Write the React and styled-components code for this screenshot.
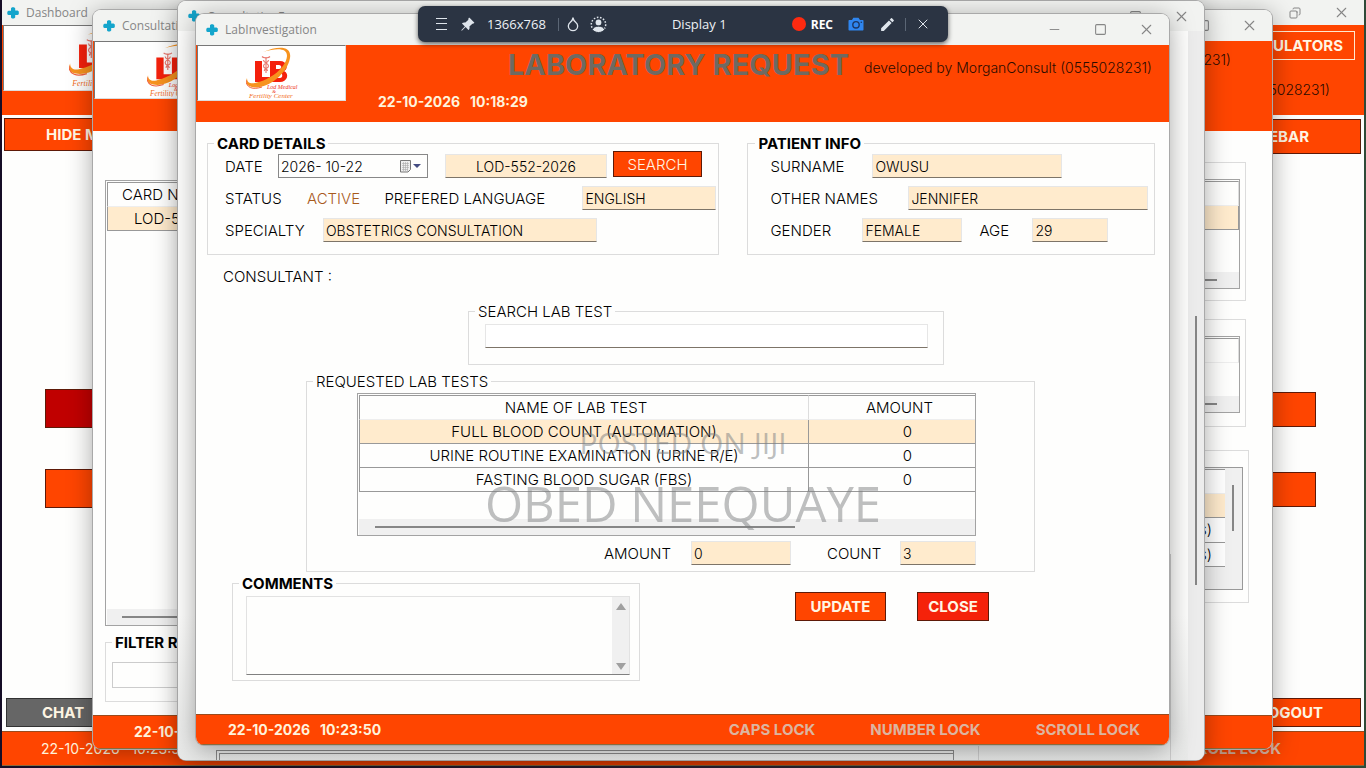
import React from "react";
import styled, { createGlobalStyle, css } from "styled-components";
import { BsPinAngleFill } from "react-icons/bs";
import { MdEdit } from "react-icons/md";
import { Droplet, X, Square, Minus, Copy } from "lucide-react";

const GlobalStyle = createGlobalStyle`
  * {
    box-sizing: border-box;
  }
  body {
    margin: 0;
    font-family: Inter, "Liberation Sans", sans-serif;
    font-size: 15px;
    font-weight: 300;
    color: #000;
  }
  button, input, textarea {
    font: inherit;
    color: inherit;
    margin: 0;
    border-radius: 0;
  }
`;

const orange = "#ff4500";
const cream = "#ffebcd";

const Desktop = styled.div`
  position: relative;
  height: 100vh;
  min-height: 700px;
  overflow: hidden;
  background: linear-gradient(90deg, #150d26 0%, #2b2338 50%, #2f4a38 100%);
`;

/* windows are stacked on the desktop, each with its own insets */
const Frame = styled.section`
  position: absolute;
  top: ${({ $inset }) => $inset[0]}px;
  right: ${({ $inset }) => $inset[1]}px;
  bottom: ${({ $inset }) => $inset[2]}px;
  left: ${({ $inset }) => $inset[3]}px;
  display: flex;
  flex-direction: column;
  overflow: hidden;
  background: #fefefd;
  border-radius: ${({ $flat }) => ($flat ? 0 : 8)}px;
  box-shadow: ${({ $flat }) =>
    $flat ? "none" : "0 0 0 1px #a9a9a9, 0 4px 26px rgba(0, 0, 0, 0.36)"};
`;

const TitleBar = styled.header`
  flex: none;
  height: ${({ $height }) => $height || 31}px;
  padding-left: ${({ $flat }) => ($flat ? 5 : 10)}px;
  display: flex;
  align-items: center;
  background: #f2f3f1;
  color: #868686;
  font-family: "Open Sans", sans-serif;
  font-size: 12px;
  font-weight: 400;
  span {
    flex: 1;
    padding-left: 7px;
  }
`;

const WindowButton = styled.button`
  width: 46px;
  height: 100%;
  padding: 0;
  border: none;
  background: none;
  display: flex;
  align-items: center;
  justify-content: center;
`;

const Banner = styled.div`
  flex: none;
  height: ${({ $height }) => $height}px;
  display: flex;
  align-items: flex-start;
  background: ${orange};
`;

const LogoBox = styled.div`
  flex: none;
  width: ${({ $width }) => $width}px;
  height: ${({ $height }) => $height}px;
  margin-left: 1px;
  display: flex;
  align-items: center;
  justify-content: center;
  background: #fff;
  border: 1px solid #ddd;
  border-top-color: #777;
  border-left-color: #777;
`;

const BannerMain = styled.div`
  flex: 1;
  padding: 0 7px 0 32px;
`;

const BannerTitle = styled.div`
  display: flex;
  justify-content: flex-end;
  align-items: center;
  gap: 15px;
  height: 40px;
  h1 {
    margin: 0;
    font-size: 29px;
    line-height: 32px;
    font-weight: 700;
    color: #6e6a62;
  }
`;

const Credit = styled.div`
  min-width: 298px;
  font-size: 14px;
  color: #2b0c00;
  padding-top: 4px;
`;

const Clock = styled.time`
  font-size: 14px;
  line-height: 34px;
  font-weight: 700;
  color: #fff3dc;
  white-space: pre;
`;

const StatusBar = styled.footer`
  flex: none;
  height: ${({ $height }) => $height || 31}px;
  padding: 0 29px 0 ${({ $left }) => $left || 32}px;
  display: flex;
  align-items: center;
  gap: 55px;
  background: ${orange};
  border-top: 1px solid #9a4a1c;
  border-bottom: 1px solid #8a6a3c;
  color: #dcb5a0;
  font-size: 15px;
  font-weight: 700;
  time {
    flex: 1;
  }
`;

const LightClock = styled(Clock)`
  font-weight: 400;
`;

const Body = styled.main`
  flex: 1;
  padding: 14px 14px 0 11px;
`;

const Group = styled.fieldset`
  min-width: 0;
  margin: 0;
  padding: ${({ $pad }) => $pad};
  border: 1px solid #dcdcdc;
`;

const Legend = styled.legend`
  margin-left: ${({ $shift }) => $shift || 0}px;
  padding: 0 3px;
  line-height: 15px;
  font-weight: ${({ $bold }) => ($bold ? 700 : 300)};
  white-space: nowrap;
`;

const Details = styled.div`
  display: grid;
  grid-template-columns: 513fr 408fr;
  column-gap: 28px;
`;

const Rows = styled.div`
  display: flex;
  flex-direction: column;
  gap: 8px;
`;

const Row = styled.div`
  display: flex;
  align-items: center;
  height: 24px;
`;

const Label = styled.label`
  flex: none;
  width: ${({ $width }) => $width}px;
  white-space: nowrap;
`;

const Status = styled.output`
  width: 79px;
  color: #a85a1c;
`;

const fieldCss = css`
  width: ${({ $width }) => $width}px;
  height: 24px;
  padding: 0 2px;
  border: 1px solid #e6e6e6;
  border-bottom-color: #7d7468;
  outline: none;
`;

const Field = styled.input`
  ${fieldCss}
  background: ${cream};
  font-size: 14px;
  text-align: ${({ $center }) => ($center ? "center" : "left")};
`;

const DateBox = styled.div`
  width: 150px;
  height: 24px;
  margin-right: 17px;
  padding-right: 5px;
  display: flex;
  align-items: center;
  border: 1px solid #888;
  input {
    flex: 1;
    min-width: 0;
    height: 20px;
    padding: 0 2px;
    border: none;
    outline: none;
    background: none;
    font-size: 14px;
  }
  button {
    padding: 0;
    border: none;
    background: none;
    display: flex;
  }
`;

const Button = styled.button`
  flex: none;
  height: ${({ $height }) => $height || 29}px;
  width: ${({ $width }) => $width}px;
  padding: 0;
  border: 1px solid #5e1a08;
  background: ${({ $color }) => $color || orange};
  color: #fff6e4;
  font-size: 15px;
  font-weight: ${({ $light }) => ($light ? 300 : 700)};
`;

const SearchButton = styled(Button)`
  margin-left: 6px;
  margin-bottom: 4px;
`;

const Consultant = styled.p`
  margin: 0;
  padding: 13px 0 0 16px;
  line-height: 18px;
`;

const SearchGroup = styled(Group)`
  margin: 18px 211px 0 261px;
`;

const SearchInput = styled.input`
  ${fieldCss}
  width: 100%;
  display: block;
`;

const TestsGroup = styled(Group)`
  margin: 9px 120px 0 99px;
`;

const GridBox = styled.div`
  height: ${({ $height }) => $height}px;
  padding-top: 1px;
  padding-left: 1px;
  display: flex;
  flex-direction: column;
  justify-content: space-between;
  overflow: hidden;
  border: 1px solid #a3a3a3;
`;

const DataTable = styled.table`
  width: 648px;
  table-layout: fixed;
  border-spacing: 0;
  th,
  td {
    height: 24px;
    padding: 0;
    text-align: center;
    font-weight: 300;
    border-right: 1px solid #999;
    border-bottom: 1px solid #999;
  }
  th {
    height: 25px;
    padding-right: 16px;
    border-top: 1px solid #999;
    border-bottom-color: #eee;
    border-right-color: #ddd;
  }
  tr > :first-child {
    width: 450px;
    border-left: 1px solid #999;
  }
  tbody tr:first-child td {
    background: ${cream};
  }
`;

const ScrollTrack = styled.div`
  height: 16px;
  padding: 7px 0 0 ${({ $from }) => $from}px;
  background: #f0f0f0;
  &::before {
    content: "";
    display: block;
    width: ${({ $size }) => $size};
    height: 2px;
    background: #868686;
  }
`;

const Totals = styled.div`
  display: flex;
  justify-content: flex-end;
  align-items: center;
  padding-top: 5px;
`;

const Bottom = styled.div`
  display: flex;
  align-items: flex-start;
  padding: 4px 0 0 25px;
`;

const Comments = styled(Group)`
  width: 408px;
`;

const CommentBox = styled.div`
  height: 79px;
  display: flex;
  border: 1px solid #e2e2e2;
  border-bottom-color: #808080;
  textarea {
    flex: 1;
    padding: 2px;
    border: none;
    outline: none;
    resize: none;
    background: none;
  }
`;

const CommentScroll = styled.div`
  width: 17px;
  padding: 6px 0 4px;
  display: flex;
  flex-direction: column;
  align-items: center;
  justify-content: space-between;
  background: #f0f0f0;
`;

const Actions = styled.div`
  display: flex;
  gap: 31px;
  padding: 16px 0 0 155px;
`;

const Watermark = styled.div`
  position: absolute;
  inset: 0;
  padding-top: 423px;
  text-align: center;
  pointer-events: none;
  color: rgba(125, 128, 130, 0.5);
  font-family: "Open Sans", sans-serif;
  font-weight: 400;
  p {
    margin: 0;
    font-size: 30px;
    line-height: 40px;
  }
  p + p {
    font-size: 49px;
    line-height: 80px;
  }
`;

const RecorderDock = styled.div`
  position: absolute;
  top: 6px;
  left: 0;
  right: 0;
  display: flex;
  justify-content: center;
  pointer-events: none;
`;

const Recorder = styled.div`
  width: 530px;
  height: 36px;
  padding: 0 17px;
  display: flex;
  align-items: center;
  border-radius: 7px;
  background: #2b3443;
  box-shadow: 0 2px 5px rgba(0, 0, 0, 0.6);
  color: #eef1f5;
  font-family: "Open Sans", sans-serif;
  font-size: 13px;
  font-weight: 400;
  button {
    padding: 0;
    border: none;
    background: none;
    color: #dfe5ec;
    display: flex;
    align-items: center;
  }
`;

const ToolGroup = styled.div`
  display: flex;
  align-items: center;
  gap: ${({ $gap }) => $gap}px;
`;

const Effects = styled(ToolGroup)`
  margin-left: 6px;
`;

const Display = styled.div`
  flex: 1;
  text-align: center;
`;

const Divider = styled.i`
  width: 1px;
  height: 13px;
  background: #5b6675;
`;

const CameraButton = styled.button`
  width: 28px;
  height: 26px;
  justify-content: center;
`;

const RecButton = styled.button`
  gap: 5px;
  && {
    font-weight: 700;
    font-size: 12px;
    color: #fff;
  }
  &::before {
    content: "";
    width: 14px;
    height: 14px;
    border-radius: 50%;
    background: #ff2a10;
  }
`;

/* dashboard */

const DashBanner = styled(Banner)`
  justify-content: space-between;
`;

const DashRight = styled.div`
  padding: 6px 9px 0 0;
  text-align: right;
  ${Credit} {
    padding: 21px 25px 0 0;
    font-size: 14px;
  }
`;

const OutlineButton = styled(Button)`
  width: 150px;
  padding-right: 11px;
  border-color: #ffe9d0;
  text-align: right;
`;

const DashBody = styled.div`
  flex: 1;
  display: flex;
  justify-content: space-between;
  padding: 3px 3px 4px 2px;
`;

const SideColumn = styled.div`
  width: 190px;
  display: flex;
  flex-direction: column;
  align-items: ${({ $right }) => ($right ? "flex-end" : "stretch")};
`;

const MenuButton = styled(Button)`
  height: 33px;
  padding-left: 41px;
  text-align: left;
`;

const SidebarButton = styled(Button)`
  height: 35px;
  margin-top: 1px;
  padding-right: 51px;
  text-align: right;
`;

const SideStack = styled.div`
  flex: 1;
  display: flex;
  flex-direction: column;
  gap: ${({ $gap }) => $gap}px;
  padding: 238px 45px 0 41px;
`;

const ChatButton = styled(Button)`
  margin-left: 2px;
  padding-left: 35px;
  border-color: #333;
  text-align: left;
`;

const LogoutButton = styled(Button)`
  padding-right: 37px;
  text-align: right;
`;

const ScrollLock = styled.span`
  margin-right: 54px;
`;

/* consultation list */

const LightCredit = styled(Credit)`
  && {
    padding: 4px 32px 0 0;
  }
`;

const ListBody = styled.div`
  flex: 1;
  display: flex;
  justify-content: space-between;
  padding: 23px 23px 13px 12px;
`;

const ListLeft = styled.div`
  width: 300px;
  padding-top: 26px;
  display: flex;
  flex-direction: column;
`;

const CardGrid = styled(GridBox)`
  height: auto;
  flex: 1;
`;

const CardTable = styled(DataTable)`
  width: 100%;
  th,
  tr > :first-child {
    padding: 0 0 0 14px;
    width: auto;
    text-align: left;
  }
  tr > td:first-child {
    padding-left: 26px;
  }
`;

const FilterGroup = styled(Group)`
  margin-top: 9px;
`;

const FilterInput = styled.input`
  width: 250px;
  height: 26px;
  display: block;
  border: 1px solid #ccc;
  background: none;
`;

const ListRight = styled.div`
  width: 260px;
  padding-top: 8px;
`;

const Panel = styled.div`
  height: ${({ $height }) => $height}px;
  margin: 0 ${({ $right }) => $right}px ${({ $gap }) => $gap}px 0;
  padding: 16px 5px 12px;
  border: 1px solid #dcdcdc;
`;

const DrugBox = styled.div`
  height: 123px;
  padding: 1px 8px 15px 1px;
  display: flex;
  justify-content: space-between;
  background: #f0f0f0;
  border: 1px solid #999;
`;

const DrugTable = styled(CardTable)`
  width: 228px;
  height: 98px;
  background: #fff;
  th,
  td {
    border-right: none;
  }
  tr > td:first-child {
    padding-right: 13px;
    text-align: right;
  }
`;

const Thumb = styled.i`
  flex: none;
  width: 2px;
  height: ${({ $height }) => $height}px;
  margin-top: ${({ $top }) => $top}px;
  background: #868686;
`;

/* consultation form */

const FormBody = styled.div`
  flex: 1;
  display: flex;
  background: linear-gradient(180deg, #fefefd 80%, #e8e9e8 100%);
`;

const FormPage = styled.div`
  flex: 1;
  display: flex;
  align-items: flex-end;
  gap: 24px;
  padding: 0 17px 0 38px;
`;

const FormGrid = styled.div`
  flex: 1;
  height: 10px;
  padding: 2px 0 0 2px;
  border: 1px solid #888;
  border-bottom: none;
  div {
    height: 7px;
    border-top: 1px solid #888;
    border-left: 1px solid #888;
  }
`;

const FormSide = styled.div`
  width: 193px;
  height: 206px;
  border: 1px solid #ccc;
  border-bottom: none;
`;

const FormScroll = styled.div`
  width: 16px;
  padding-left: 7px;
  display: flex;
  background: #ececec;
`;

function AppIcon() {
  return (
    <svg width="12" height="12" viewBox="0 0 12 12" aria-hidden="true">
      <path
        d="M4 1.200 5 .3h2l1.200 1V3.600h2.400l1.200 1v2.600L10.600 8H8.200v2.600l-1.200 1H5l-1-1V8H1.400L.3 7.200V4.700l1.100-1H4z"
        fill="#14a5cc"
      />
    </svg>
  );
}

function Logo({ size }) {
  return (
    <svg width={size} height={size} viewBox="0 0 52 52" aria-hidden="true">
      <path d="M9 14h7v16h8v5H9z" fill="#f4200c" />
      <path
        d="M24 14h10c7 0 9 8 4 10 6 3 3 11-4 11H24zm6 4v4h3c3 0 3-4 0-4zm0 8v5h4c3 0 3-5 0-5z"
        fill="#f4200c"
        fillRule="evenodd"
      />
      <path
        d="M16 9.500c2 2 4 .5 4 2 0-1.500 2 0 4-2M20 10v16M17.500 13c0 3 5 3 5 6s-5 2-4 5M22.500 13c0 3-5 3-5 6s4 2 4 5"
        fill="none"
        stroke="#e8776d"
        strokeWidth="1.100"
      />
      <path
        d="M17 5C33-2 46-1 44 11 41 28 20 43 6 40 1 39-1 36 1 31c0 5 4 6 8 5C24 33 40 21 41 9 41 1 31 1 17 5z"
        fill="#f7931e"
      />
      <path d="M0 33c0 8 7 10 16 7" fill="none" stroke="#f2603a" strokeWidth="1" />
      <g fontFamily="Liberation Serif, serif" fontStyle="italic" fontWeight="400">
        <text x="21" y="42" fontSize="6" fill="#ee3424">
          Lod Medical
        </text>
        <text x="26" y="46" fontSize="5" fill="#ee3424">
          &amp;
        </text>
        <text x="3" y="51" fontSize="7" fill="#f26a21">
          Fertility Center
        </text>
      </g>
    </svg>
  );
}

function CalendarIcon() {
  return (
    <svg width="23" height="15" viewBox="0 0 23 15" aria-hidden="true">
      <path d="M1.500 1.500h10v9l-2.500 2.500H1.500z" fill="#eee" stroke="#777" />
      <path
        d="M3 4.500h7M3 6.500h7M3 8.500h7M3 10.500h6M4.500 3v9M6.500 3v9M8.500 3v9"
        stroke="#aaa"
        strokeWidth=".6"
      />
      <path d="M14 5h8l-4 4z" fill="#444c82" />
    </svg>
  );
}

function PersonIcon() {
  return (
    <svg width="17" height="17" viewBox="0 0 17 17" aria-hidden="true">
      <circle
        cx="8.500"
        cy="8.500"
        r="7.200"
        fill="none"
        stroke="#dfe5ec"
        strokeWidth="1.500"
        strokeDasharray="1.600 1.600"
      />
      <circle cx="8.500" cy="6.500" r="2.900" fill="#dfe5ec" />
      <path
        d="M2.500 13.500c1-4.500 11-4.500 12 0-2 4-10 4-12 0z"
        fill="#dfe5ec"
        stroke="#2b3443"
      />
    </svg>
  );
}

function CameraIcon() {
  return (
    <svg width="16" height="14" viewBox="0 0 16 14" aria-hidden="true">
      <path
        d="M1.500 3H4l1.300-2.300h5.200L12 3h2.500c.6 0 1 .4 1 1v8.500c0 .6-.4 1-1 1h-13c-.6 0-1-.4-1-1V4c0-.6.4-1 1-1z"
        fill="#2f86f0"
      />
      <circle cx="8" cy="7.800" r="3.200" fill="none" stroke="#1d3763" strokeWidth="1.400" />
      <circle cx="13.300" cy="5.200" r=".8" fill="#1d3763" />
    </svg>
  );
}

function Arrow({ down }) {
  return (
    <svg width="10" height="7" viewBox="0 0 10 7" aria-hidden="true">
      <path d={down ? "M0 0h10L5 7z" : "M0 7h10L5 0z"} fill="#a0a0a0" />
    </svg>
  );
}

function AppWindow({ title, inset, flat, barHeight, restored, children }) {
  return (
    <Frame $inset={inset} $flat={flat}>
      <TitleBar $flat={flat} $height={barHeight}>
        <AppIcon />
        <span>{title}</span>
        <WindowButton aria-label="Minimize">
          <Minus size={15} strokeWidth={1.5} />
        </WindowButton>
        <WindowButton aria-label="Maximize">
          {restored ? (
            <Copy size={12} strokeWidth={2} transform="rotate(90)" />
          ) : (
            <Square size={13} strokeWidth={2} />
          )}
        </WindowButton>
        <WindowButton aria-label="Close">
          <X size={17} strokeWidth={1.5} />
        </WindowButton>
      </TitleBar>
      {children}
    </Frame>
  );
}

function Dashboard() {
  return (
    <AppWindow title="Dashboard" inset={[0, 2, 2, 2]} flat barHeight={25} restored>
      <DashBanner $height={90}>
        <LogoBox $width={190} $height={66}>
          <Logo size={58} />
        </LogoBox>
        <DashRight>
          <OutlineButton>CALCULATORS</OutlineButton>
          <Credit>developed by MorganConsult (0555028231)</Credit>
        </DashRight>
      </DashBanner>
      <DashBody>
        <SideColumn>
          <MenuButton>HIDE MENU</MenuButton>
          <SideStack $gap={41}>
            <Button $height={39} $color="#c00000" aria-label="Records" />
            <Button $height={39} aria-label="Reports" />
          </SideStack>
          <ChatButton $color="#666">CHAT</ChatButton>
        </SideColumn>
        <SideColumn $right>
          <SidebarButton $width={190}>HIDE SIDEBAR</SidebarButton>
          <SideStack $gap={45}>
            <Button $height={35} $width={104} aria-label="Billing" />
            <Button $height={35} $width={104} aria-label="Settings" />
          </SideStack>
          <LogoutButton $width={190}>LOGOUT</LogoutButton>
        </SideColumn>
      </DashBody>
      <StatusBar $height={35} $left={39}>
        <LightClock>22-10-2026   10:23:51</LightClock>
        <ScrollLock>SCROLL LOCK</ScrollLock>
      </StatusBar>
    </AppWindow>
  );
}

function Consultation() {
  return (
    <AppWindow title="Consultation" inset={[10, 94, 19, 93]}>
      <DashBanner $height={90}>
        <LogoBox $width={160} $height={58}>
          <Logo size={54} />
        </LogoBox>
        <DashRight>
          <LightCredit>developed by MorganConsult (0555028231)</LightCredit>
        </DashRight>
      </DashBanner>
      <ListBody>
        <ListLeft>
          <CardGrid>
            <CardTable>
              <thead>
                <tr>
                  <th>CARD NUMBER</th>
                </tr>
              </thead>
              <tbody>
                <tr>
                  <td>LOD-552-2026</td>
                </tr>
              </tbody>
            </CardTable>
            <ScrollTrack $from={15} $size="200px" />
          </CardGrid>
          <FilterGroup $pad="12px 6px 13px">
            <Legend $bold>FILTER RECORDS</Legend>
            <FilterInput aria-label="Filter records" />
          </FilterGroup>
        </ListLeft>
        <ListRight>
          <Panel $height={139} $right={3} $gap={18}>
            <GridBox $height={110}>
              <CardTable>
                <thead>
                  <tr>
                    <th>DATE</th>
                  </tr>
                </thead>
                <tbody>
                  <tr>
                    <td>22-10-2026</td>
                  </tr>
                </tbody>
              </CardTable>
              <ScrollTrack $from={20} $size="200px" />
            </GridBox>
          </Panel>
          <Panel $height={108} $right={3} $gap={23}>
            <GridBox $height={77}>
              <CardTable>
                <thead>
                  <tr>
                    <th>TEST</th>
                  </tr>
                </thead>
              </CardTable>
              <ScrollTrack $from={20} $size="200px" />
            </GridBox>
          </Panel>
          <Panel $height={153} $right={0} $gap={0}>
            <DrugBox>
              <DrugTable>
                <thead>
                  <tr>
                    <th>DRUG</th>
                  </tr>
                </thead>
                <tbody>
                  <tr>
                    <td />
                  </tr>
                  <tr>
                    <td>Tablet(s)</td>
                  </tr>
                  <tr>
                    <td>Tablet(s)</td>
                  </tr>
                </tbody>
              </DrugTable>
              <Thumb $height={46} $top={16} />
            </DrugBox>
          </Panel>
        </ListRight>
      </ListBody>
      <StatusBar $height={34} $left={41}>
        <Clock>22-10-2026   10:23:51</Clock>
      </StatusBar>
    </AppWindow>
  );
}

function ConsultationForm() {
  return (
    <AppWindow title="ConsultationForm" inset={[1, 162, 8, 178]} barHeight={30}>
      <FormBody>
        <FormPage>
          <FormGrid>
            <div />
          </FormGrid>
          <FormSide />
        </FormPage>
        <FormScroll>
          <Thumb $height={269} $top={285} />
        </FormScroll>
      </FormBody>
    </AppWindow>
  );
}

const tests = [
  ["FULL BLOOD COUNT (AUTOMATION)", 0],
  ["URINE ROUTINE EXAMINATION (URINE R/E)", 0],
  ["FASTING BLOOD SUGAR (FBS)", 0],
];

function LabInvestigation() {
  return (
    <AppWindow title="LabInvestigation" inset={[14, 197, 23, 196]}>
      <Banner $height={77}>
        <LogoBox $width={149} $height={56}>
          <Logo size={52} />
        </LogoBox>
        <BannerMain>
          <BannerTitle>
            <h1>LABORATORY REQUEST</h1>
            <Credit>developed by MorganConsult (0555028231)</Credit>
          </BannerTitle>
          <Clock>22-10-2026   10:18:29</Clock>
        </BannerMain>
      </Banner>

      <Body>
        <Details>
          <Group $pad="3px 2px 12px 17px">
            <Legend $bold $shift={-11}>
              CARD DETAILS
            </Legend>
            <Rows>
              <Row>
                <Label htmlFor="date" $width={53}>
                  DATE
                </Label>
                <DateBox>
                  <input id="date" defaultValue="2026- 10-22" />
                  <button aria-label="Open calendar">
                    <CalendarIcon />
                  </button>
                </DateBox>
                <Field $width={162} $center aria-label="Card number" defaultValue="LOD-552-2026" />
                <SearchButton $height={26} $width={89} $light>
                  SEARCH
                </SearchButton>
              </Row>
              <Row>
                <Label htmlFor="status" $width={82}>
                  STATUS
                </Label>
                <Status id="status">ACTIVE</Status>
                <Label htmlFor="language" $width={198}>
                  PREFERED LANGUAGE
                </Label>
                <Field id="language" $width={134} defaultValue="ENGLISH" />
              </Row>
              <Row>
                <Label htmlFor="specialty" $width={98}>
                  SPECIALTY
                </Label>
                <Field id="specialty" $width={274} defaultValue="OBSTETRICS CONSULTATION" />
              </Row>
            </Rows>
          </Group>

          <Group $pad="3px 6px 12px 22px">
            <Legend $bold $shift={-15}>
              PATIENT INFO
            </Legend>
            <Rows>
              <Row>
                <Label htmlFor="surname" $width={102}>
                  SURNAME
                </Label>
                <Field id="surname" $width={190} defaultValue="OWUSU" />
              </Row>
              <Row>
                <Label htmlFor="names" $width={138}>
                  OTHER NAMES
                </Label>
                <Field id="names" $width={241} defaultValue="JENNIFER" />
              </Row>
              <Row>
                <Label htmlFor="gender" $width={92}>
                  GENDER
                </Label>
                <Field id="gender" $width={100} defaultValue="FEMALE" style={{ marginRight: 17 }} />
                <Label htmlFor="age" $width={53}>
                  AGE
                </Label>
                <Field id="age" $width={76} defaultValue="29" />
              </Row>
            </Rows>
          </Group>
        </Details>

        <Consultant>CONSULTANT :</Consultant>

        <SearchGroup $pad="5px 15px 16px 16px">
          <Legend $shift={-10}>SEARCH LAB TEST</Legend>
          <SearchInput aria-label="Search lab test" />
        </SearchGroup>

        <TestsGroup $pad="4px 58px 6px 50px">
          <Legend $shift={-44}>REQUESTED LAB TESTS</Legend>
          <GridBox $height={143}>
            <DataTable>
              <thead>
                <tr>
                  <th>NAME OF LAB TEST</th>
                  <th>AMOUNT</th>
                </tr>
              </thead>
              <tbody>
                {tests.map(([name, amount]) => (
                  <tr key={name}>
                    <td>{name}</td>
                    <td>{amount}</td>
                  </tr>
                ))}
              </tbody>
            </DataTable>
            <ScrollTrack $from={16} $size="70%" />
          </GridBox>
          <Totals>
            <Label htmlFor="amount" $width={87}>
              AMOUNT
            </Label>
            <Field id="amount" $width={100} defaultValue="0" style={{ marginRight: 36 }} />
            <Label htmlFor="count" $width={73}>
              COUNT
            </Label>
            <Field id="count" $width={76} defaultValue="3" />
          </Totals>
        </TestsGroup>

        <Bottom>
          <Comments $pad="5px 9px 5px 13px">
            <Legend $bold $shift={-7}>
              COMMENTS
            </Legend>
            <CommentBox>
              <textarea aria-label="Comments" />
              <CommentScroll>
                <Arrow />
                <Arrow down />
              </CommentScroll>
            </CommentBox>
          </Comments>
          <Actions>
            <Button $width={91}>UPDATE</Button>
            <Button $width={72} $color="#f5220a">
              CLOSE
            </Button>
          </Actions>
        </Bottom>
      </Body>

      <StatusBar>
        <Clock>22-10-2026   10:23:50</Clock>
        <span>CAPS LOCK</span>
        <span>NUMBER LOCK</span>
        <span>SCROLL LOCK</span>
      </StatusBar>
    </AppWindow>
  );
}

function RecorderBar() {
  return (
    <RecorderDock>
      <Recorder>
        <ToolGroup $gap={12}>
          <button aria-label="Menu">
            <svg width="13" height="12" viewBox="0 0 13 12">
              <path d="M1 .5h11M1 5.500h11M1 11.500h11" stroke="#dfe5ec" />
            </svg>
          </button>
          <button aria-label="Pin">
            <BsPinAngleFill size={15} />
          </button>
          <span>1366x768</span>
          <Divider />
        </ToolGroup>
        <Effects $gap={9}>
          <button aria-label="Effects">
            <Droplet size={16} strokeWidth={2} />
          </button>
          <button aria-label="Webcam">
            <PersonIcon />
          </button>
        </Effects>
        <Display>Display 1</Display>
        <ToolGroup $gap={9}>
          <RecButton>REC</RecButton>
          <CameraButton aria-label="Screenshot">
            <CameraIcon />
          </CameraButton>
          <button aria-label="Draw">
            <MdEdit size={17} />
          </button>
          <Divider />
          <button aria-label="Close recorder">
            <X size={16} strokeWidth={1.5} />
          </button>
        </ToolGroup>
      </Recorder>
    </RecorderDock>
  );
}

export default function App() {
  return (
    <>
      <GlobalStyle />
      <Desktop>
        <Dashboard />
        <Consultation />
        <ConsultationForm />
        <LabInvestigation />
        <Watermark>
          <p>POSTED ON JIJI</p>
          <p>OBED NEEQUAYE</p>
        </Watermark>
        <RecorderBar />
      </Desktop>
    </>
  );
}
